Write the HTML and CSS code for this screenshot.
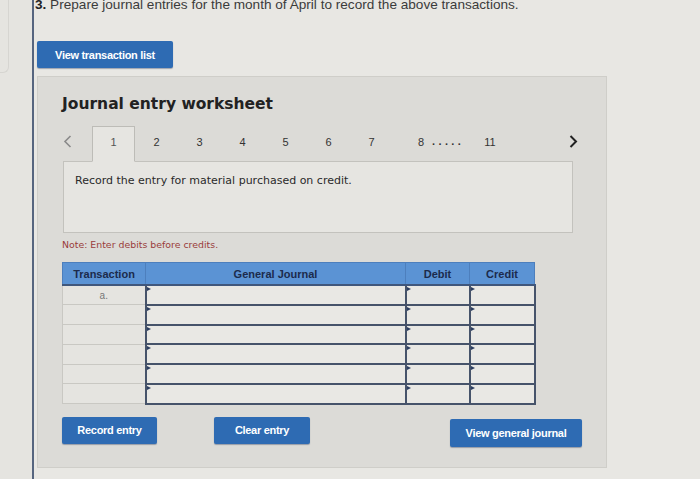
FILE: index.html
```html
<!DOCTYPE html>
<html>
<head>
<meta charset="utf-8">
<link rel="stylesheet" href="styles.css">
</head>
<body>
<div class="page">
  <div class="gutter"><div class="ghost"></div></div>
  <div class="main">
    <p class="title"><b>3.</b> Prepare journal entries for the month of April to record the above transactions.</p>
    <button class="btn btn-list">View transaction list</button>
    <section class="panel">
      <h2 class="heading">Journal entry worksheet</h2>
      <div class="tabs">
        <span class="arrow prev"><svg width="9" height="13" viewBox="0 0 9 13"><path d="M7.5 1 L2 6.5 L7.5 12" fill="none" stroke="#8a8a8a" stroke-width="1.6"/></svg></span>
        <span class="tab active">1</span>
        <span class="tab">2</span>
        <span class="tab">3</span>
        <span class="tab">4</span>
        <span class="tab">5</span>
        <span class="tab">6</span>
        <span class="tab">7</span>
        <span class="tab tab8">8</span>
        <span class="dots">.....</span>
        <span class="tab tab11">11</span>
        <span class="arrow next"><svg width="9" height="13" viewBox="0 0 9 13"><path d="M1.5 1 L7 6.5 L1.5 12" fill="none" stroke="#222" stroke-width="2"/></svg></span>
      </div>
      <div class="prompt">Record the entry for material purchased on credit.</div>
      <p class="note">Note: Enter debits before credits.</p>
      <table class="journal">
        <thead>
          <tr><th class="c-tx">Transaction</th><th class="c-gj">General Journal</th><th class="c-dr">Debit</th><th class="c-cr">Credit</th></tr>
        </thead>
        <tbody>
          <tr><td class="tx">a.</td><td class="in"></td><td class="in"></td><td class="in"></td></tr>
          <tr><td class="tx"></td><td class="in"></td><td class="in"></td><td class="in"></td></tr>
          <tr><td class="tx"></td><td class="in"></td><td class="in"></td><td class="in"></td></tr>
          <tr><td class="tx"></td><td class="in"></td><td class="in"></td><td class="in"></td></tr>
          <tr><td class="tx"></td><td class="in"></td><td class="in"></td><td class="in"></td></tr>
          <tr><td class="tx"></td><td class="in"></td><td class="in"></td><td class="in"></td></tr>
        </tbody>
      </table>
      <div class="actions">
        <button class="btn btn-record">Record entry</button>
        <button class="btn btn-clear">Clear entry</button>
        <button class="btn btn-view">View general journal</button>
      </div>
    </section>
  </div>
</div>
</body>
</html>
```

FILE: styles.css
```css
html, body {
  margin: 0;
  padding: 0;
}
body {
  background: #e8e7e3;
  font-family: "Liberation Sans", Arial, sans-serif;
  color: #333;
  overflow: hidden;
}
.page {
  display: flex;
  min-height: 479px;
}
.gutter {
  width: 32px;
  flex: none;
  background: #e5e4e0;
}
.ghost {
  width: 8px;
  height: 72px;
  border: 1px solid #d6d5d1;
  border-left: none;
  border-top: none;
  border-radius: 0 0 6px 0;
}
.main {
  flex: 1;
  border-left: 2px solid #56657f;
  padding-left: 1px;
}
.title {
  margin: -3px 0 0 0;
  font-size: 13.6px;
  line-height: 15px;
  color: #3b3b3b;
  white-space: nowrap;
}
.title b {
  color: #222;
}
.btn {
  display: flex;
  align-items: center;
  justify-content: center;
  border: none;
  border-radius: 2px;
  background: #2e6bb3;
  color: #fff;
  font-family: "Liberation Sans", Arial, sans-serif;
  font-weight: bold;
  font-size: 11px;
  letter-spacing: -0.3px;
  padding: 0;
  box-shadow: 0 1px 1px rgba(20, 40, 80, 0.35);
}
.btn-list {
  margin: 29px 0 0 2px;
  width: 136px;
  height: 27px;
}
.panel {
  margin: 8px 0 0 2px;
  width: 544px;
  height: 390px;
  background: #dcdbd7;
  border: 1px solid #cfcec9;
  padding: 0 0 0 24px;
  box-sizing: content-box;
}
.heading {
  margin: 17px 0 0 0;
  font-family: "DejaVu Sans", Verdana, sans-serif;
  font-weight: bold;
  font-size: 15.5px;
  line-height: 20px;
  color: #222;
}
.tabs {
  display: flex;
  align-items: stretch;
  width: 516px;
  height: 35px;
  margin-top: 12px;
  font-size: 11px;
  color: #333;
}
.arrow {
  display: flex;
  align-items: center;
}
.prev {
  width: 30px;
  padding-left: 1px;
  box-sizing: border-box;
  padding-bottom: 4px;
}
.next {
  margin-left: auto;
  padding-bottom: 4px;
}
.tab {
  width: 43px;
  display: flex;
  align-items: center;
  justify-content: center;
  padding-bottom: 4px;
  box-sizing: border-box;
}
.tab.active {
  position: relative;
  background: #e6e5e1;
  border: 1px solid #bdbcb7;
  border-bottom: 1px solid #e6e5e1;
  margin-bottom: -1px;
  height: 36px;
  color: #555;
}
.tab8 {
  width: 39px;
  justify-content: flex-end;
  padding-right: 8px;
}
.dots {
  display: flex;
  align-items: center;
  padding-bottom: 6px;
  letter-spacing: 3.4px;
  font-weight: bold;
  width: 40px;
}
.tab11 {
  width: 36px;
}
.prompt {
  margin-left: 1px;
  background: #e6e5e1;
  border: 1px solid #c3c2bd;
  font-family: "DejaVu Sans", Verdana, sans-serif;
  font-size: 11px;
  color: #2a2a2a;
  padding: 12px 0 0 11px;
  box-sizing: content-box;
  width: 497px;
  height: 58px;
}
.note {
  margin: 6px 0 0 0;
  font-family: "DejaVu Sans", Verdana, sans-serif;
  font-size: 9.4px;
  line-height: 12px;
  color: #9a3b3b;
}
.journal {
  margin-top: 11px;
  border-collapse: collapse;
  width: 472px;
  table-layout: fixed;
  font-size: 11px;
}
.journal th {
  height: 21px;
  padding: 0;
  background: #5b93d4;
  color: #1c2b4c;
  font-weight: bold;
  border: 1px solid #4d7fbd;
  border-bottom: 2px solid #40577c;
}
.c-tx { width: 82px; }
.c-gj { width: 259px; }
.c-dr { width: 63px; }
.c-cr { width: 64px; }
.journal td {
  height: 17.8px;
  padding: 0;
}
.journal td.tx {
  border: 1px solid #c9c8c3;
  background: #e5e4e0;
  text-align: center;
  color: #777;
  font-size: 10px;
}
.journal td.in {
  position: relative;
  border: 2px solid #46536a;
  background: #e9e8e4;
}
.journal td.in::before {
  content: "";
  position: absolute;
  left: 0;
  top: 1px;
  border-left: 4px solid #2c3e60;
  border-top: 2px solid transparent;
  border-bottom: 2px solid transparent;
}
.actions {
  display: flex;
  margin-top: 12px;
  width: 520px;
}
.btn-record {
  width: 95px;
  height: 27px;
}
.btn-clear {
  width: 96px;
  height: 27px;
  margin-left: 57px;
}
.btn-view {
  width: 132px;
  height: 28px;
  margin-left: auto;
  margin-top: 2px;
}
```
